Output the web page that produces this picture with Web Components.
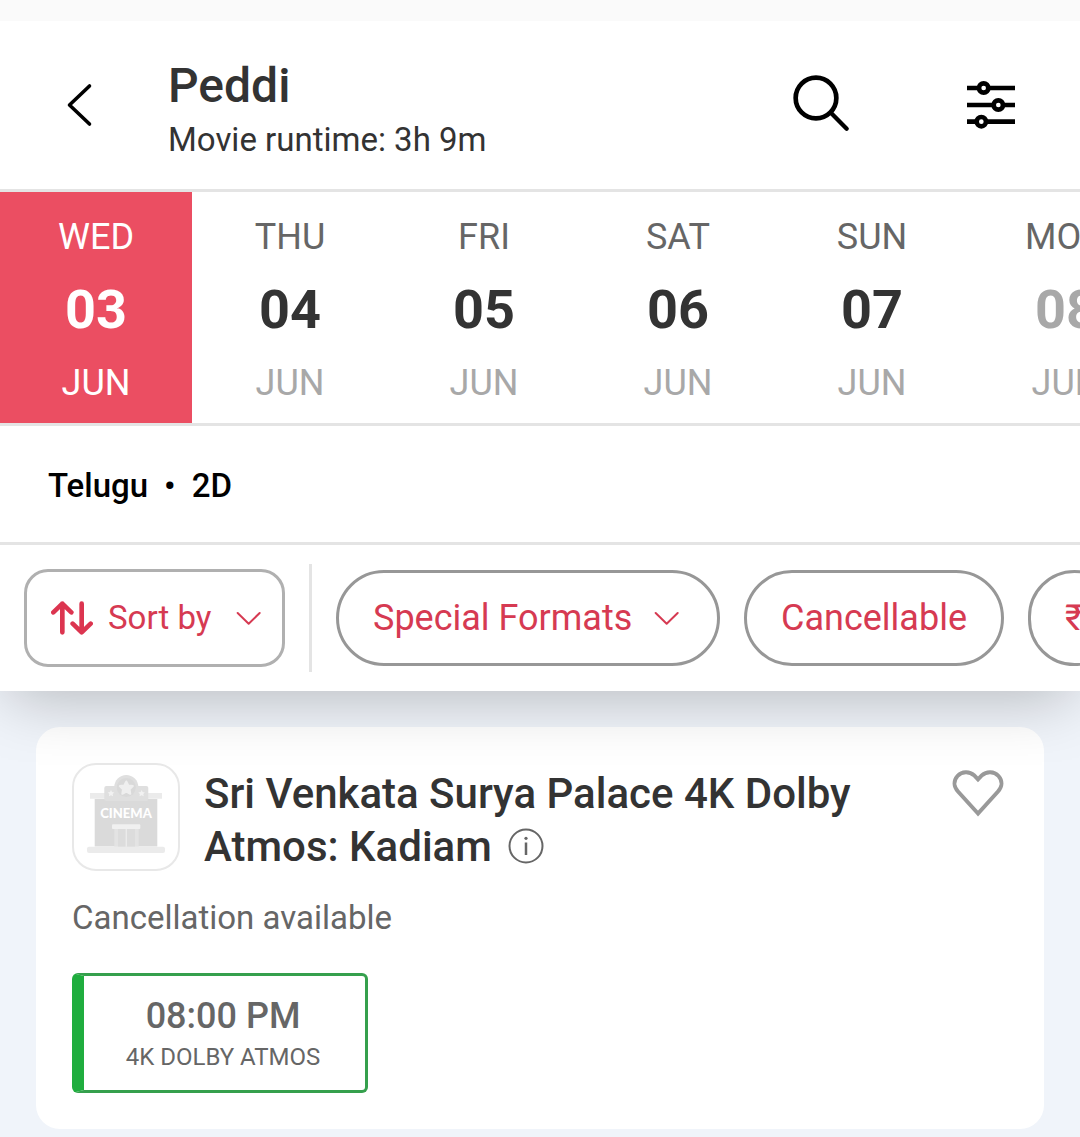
<!DOCTYPE html>
<html lang="en">
<head>
<meta charset="utf-8">
<meta name="viewport" content="width=device-width, initial-scale=1">
<title>Peddi</title>
<style>
  body {
    margin: 0;
    background: #f0f4fa;
    font-family: Roboto, "Liberation Sans", sans-serif;
    color: #333333;
  }
</style>
</head>
<body>
<showtimes-app></showtimes-app>

<script>
/**
 * Creates a template element from markup.
 *
 * @param {string} html the markup.
 * @returns {HTMLTemplateElement} The template.
 */
const createTemplate = (html) => {
  const template = document.createElement('template')
  template.innerHTML = html
  return template
}

/**
 * Defines a custom element that only renders its template.
 *
 * @param {string} name of the element.
 * @param {string} html the markup of its shadow root.
 */
const defineElement = (name, html) => {
  const template = createTemplate(html)
  customElements.define(name,
    class extends HTMLElement {
      /**
       * Creates an instance of the current type.
       */
      constructor () {
        super()
        this.attachShadow({ mode: 'open' })
          .appendChild(template.content.cloneNode(true))
      }
    }
  )
}

/**
 * The top bar with the movie title and the actions.
 */
defineElement('movie-header', `
  <style>
    :host {
      display: flex;
      align-items: center;
      padding: 0 65px 0 56px;
      border-top: 21px solid #fafafa;
      border-bottom: 3px solid #e4e4e4;
    }
    .text {
      flex: 1;
      margin-left: 64px;
      padding: 35px 0 27px;
    }
    h1 {
      margin: 0 0 2px;
      font-size: 48px;
      font-weight: 500;
      line-height: 60px;
    }
    p {
      margin: 0;
      font-size: 33px;
      line-height: 44px;
    }
    .actions {
      display: flex;
      align-items: center;
      gap: 118px;
    }
    button {
      padding: 0;
      border: 0;
      background: none;
    }
    svg {
      display: block;
      overflow: visible;
      fill: none;
      stroke: #000000;
    }
  </style>
  <button type="button" aria-label="Back">
    <svg width="48" height="48" viewBox="0 0 48 48" stroke-width="3.6" stroke-linecap="round" stroke-linejoin="round">
      <path d="M33.5 5 13.5 24l20 19"/>
    </svg>
  </button>
  <div class="text">
    <h1><slot name="title"></slot></h1>
    <p><slot name="runtime"></slot></p>
  </div>
  <div class="actions">
    <button type="button" aria-label="Search">
      <svg width="56" height="56" viewBox="0 0 168 168" stroke-linecap="round">
        <circle cx="69" cy="63" r="61" stroke-width="14"/>
        <path d="M115 109l46 46" stroke-width="13"/>
      </svg>
    </button>
    <button type="button" aria-label="Filters">
      <svg width="48" height="48" viewBox="0 0 144 144" stroke-width="14">
        <path d="M0 21h144M0 72h144M0 122h144"/>
        <g fill="#ffffff">
          <circle cx="50" cy="21" r="14"/>
          <circle cx="94" cy="72" r="14"/>
          <circle cx="43" cy="122" r="14"/>
        </g>
      </svg>
    </button>
  </div>
`)

defineElement('date-strip', `
  <style>
    :host {
      display: flex;
      gap: 2px;
      overflow: hidden;
      border-bottom: 3px solid #e4e4e4;
    }
  </style>
  <slot></slot>
`)

/**
 * One day in the date strip.
 */
defineElement('date-item', `
  <style>
    :host {
      display: block;
      flex: 0 0 192px;
    }
    button {
      display: flex;
      flex-direction: column;
      align-items: center;
      gap: 19px;
      width: 100%;
      padding: 23px 0 18px;
      border: 0;
      background: none;
      font: 400 36px/44px Roboto, "Liberation Sans", sans-serif;
      color: #666666;
    }
    .date {
      font-size: 54px;
      font-weight: 700;
      line-height: 64px;
      color: #333333;
    }
    .month {
      color: #a8a8a8;
    }
    :host([disabled]) .date {
      color: #a8a8a8;
    }
    :host([selected]) button {
      background: #eb4e62;
    }
    :host([selected]) span {
      color: #ffffff;
    }
  </style>
  <button type="button">
    <span><slot name="day"></slot></span>
    <span class="date"><slot></slot></span>
    <span class="month"><slot name="month"></slot></span>
  </button>
`)

/**
 * The chosen language and format.
 */
defineElement('language-bar', `
  <style>
    :host {
      display: flex;
      gap: 16px;
      padding: 38px 48px 34px;
      border-bottom: 3px solid #e4e4e4;
      font-size: 33px;
      font-weight: 500;
      line-height: 44px;
      color: #000000;
    }
  </style>
  <slot name="language"></slot>
  <span>•</span>
  <slot name="format"></slot>
`)

/**
 * The row with sorting and filter chips.
 */
defineElement('filter-bar', `
  <style>
    :host {
      display: flex;
      align-items: center;
      gap: 24px;
      padding: 19px 24px;
      overflow: hidden;
    }
    .divider {
      flex: 0 0 3px;
      height: 108px;
      background: #e4e4e4;
    }
  </style>
  <slot name="sort"></slot>
  <div class="divider"></div>
  <slot></slot>
`)

const chevron = `
  <svg width="25" height="15" viewBox="0 0 75 45" fill="none" stroke="#d63a52" stroke-width="6" stroke-linecap="round" stroke-linejoin="round" aria-hidden="true">
    <path d="M5 6l33 32L71 6"/>
  </svg>
`

defineElement('sort-select', `
  <style>
    :host {
      flex: none;
      display: block;
    }
    label {
      display: flex;
      align-items: center;
      height: 92px;
      padding: 0 21px 0 24px;
      border: 3px solid #b0b0b0;
      border-radius: 24px;
    }
    select {
      appearance: none;
      margin: 0 24px 0 15px;
      padding: 0;
      border: 0;
      background: none;
      font: 400 33px/44px Roboto, "Liberation Sans", sans-serif;
      color: #d63a52;
    }
    svg {
      flex: none;
      display: block;
    }
  </style>
  <label>
    <svg width="42" height="38" viewBox="0 0 126 114" fill="none" stroke="#dc3550" stroke-width="14" stroke-linecap="round" stroke-linejoin="round" aria-hidden="true">
      <path d="M34 100V14M7 40l27-26 27 26M92 14v86M65 74l27 26 27-26"/>
    </svg>
    <select aria-label="Sort by"><option>Sort by</option></select>
    ${chevron}
  </label>
`)

const chipStyle = `
  <style>
    :host {
      flex: none;
      display: block;
    }
    label, button {
      box-sizing: border-box;
      display: flex;
      align-items: center;
      height: 96px;
      padding: 0 34px;
      border: 3px solid #979797;
      border-radius: 48px;
      background: none;
      white-space: nowrap;
    }
    label {
      padding-right: 38px;
    }
    button, select {
      font: 400 36px/44px Roboto, "Liberation Sans", sans-serif;
      color: #d63a52;
    }
    select {
      appearance: none;
      margin: 0 21px 0 0;
      padding: 0;
      border: 0;
      background: none;
    }
    svg {
      flex: none;
      display: block;
    }
  </style>
`

defineElement('format-select', `
  ${chipStyle}
  <label>
    <select aria-label="Special Formats"><option>Special Formats</option></select>
    ${chevron}
  </label>
`)

defineElement('filter-chip', `
  ${chipStyle}
  <button type="button"><slot></slot></button>
`)

/**
 * Placeholder logo of a cinema.
 */
defineElement('cinema-logo', `
  <style>
    :host {
      box-sizing: border-box;
      flex: none;
      display: block;
      width: 108px;
      height: 108px;
      border: 2px solid #e8e8e8;
      border-radius: 24px;
      background: #ffffff;
    }
    svg {
      display: block;
    }
    text {
      font: 900 13px Lato, sans-serif;
    }
  </style>
  <svg width="104" height="104" viewBox="2 2 104 104" aria-hidden="true">
    <path fill="#dadada" d="M22.7 36H85.3V83.5H22.7z"/>
    <path fill="#ebebeb" d="M18 30h72v5.7H18z"/>
    <rect x="15" y="83.7" width="78" height="6.3" rx="2" fill="#ebebeb"/>
    <circle cx="54.3" cy="24" r="12" fill="#dfdfdf"/>
    <rect x="32.3" y="23" width="44" height="15" rx="2" fill="#dfdfdf"/>
    <circle cx="54.3" cy="24.5" r="9.5" fill="#d9d9d9"/>
    <path fill="#efefef" stroke="#efefef" stroke-width="2" stroke-linejoin="round" d="M54.3 18.500l2 4 4.500.600-3.200 3.200.700 4.500-4-2.100-4 2.100.700-4.500-3.200-3.200 4.500-.600z"/>
    <path fill="#f2f2f2" d="M39 27l1 2.100 2.300.300-1.600 1.600.400 2.300-2.100-1.100-2.100 1.100.400-2.300-1.600-1.600 2.300-.300zM69.600 27l1 2.100 2.300.300-1.600 1.600.400 2.300-2.100-1.100-2.100 1.100.400-2.300-1.600-1.600 2.300-.300z"/>
    <text x="54" y="54.5" text-anchor="middle" fill="#ffffff">CINEMA</text>
    <path fill="#e3e3e3" d="M42.3 66h24.4v17.5H42.3z"/>
    <path fill="#dcdcdc" d="M46 66h7.6v17.5H46zM55 66h8v17.5h-8z"/>
    <path stroke="#ededed" d="M54.3 66v17.5"/>
    <rect x="40" y="61.3" width="28.3" height="4.7" rx="1" fill="#f0f0f0"/>
  </svg>
`)

/**
 * A venue with its showtimes.
 */
defineElement('venue-card', `
  <style>
    :host {
      display: block;
      padding: 36px;
      border-radius: 24px;
      background: #ffffff;
    }
    header {
      display: flex;
      align-items: flex-start;
      gap: 24px;
    }
    h2 {
      flex: 1;
      max-width: 680px;
      margin: 0;
      padding-top: 4px;
      font-size: 42px;
      font-weight: 500;
      line-height: 53px;
    }
    button {
      padding: 0;
      border: 0;
      background: none;
    }
    .info {
      display: inline-block;
      margin-left: 6px;
      vertical-align: -3px;
    }
    .like {
      margin-left: auto;
    }
    svg {
      display: block;
      fill: none;
    }
    p {
      margin: 23px 0 33px;
      font-size: 33px;
      line-height: 44px;
      color: #666666;
    }
    .times {
      display: flex;
      flex-wrap: wrap;
      gap: 24px;
    }
  </style>
  <header>
    <cinema-logo></cinema-logo>
    <h2>
      <slot name="name"></slot>
      <button class="info" type="button" aria-label="Venue details">
        <svg width="36" height="36" viewBox="0 0 36 36" stroke="#666666" stroke-width="2">
          <circle cx="18" cy="18" r="16.5"/>
          <path d="M18 14.5V27" stroke-width="2.5"/>
          <circle cx="18" cy="10.3" r="1.6" fill="#666666" stroke="none"/>
        </svg>
      </button>
    </h2>
    <button class="like" type="button" aria-label="Add to favourites">
      <svg width="60" height="60" viewBox="0 0 60 60" stroke="#999999" stroke-width="4">
        <path d="M30 50.5L10 28.5C5.5 23.5 5.5 17.5 9.5 13 14 8 21.5 8 26 12.2L30 16.3 34 12.2C38.5 8 46 8 50.5 13 54.5 17.5 54.5 23.5 50 28.5z"/>
      </svg>
    </button>
  </header>
  <p><slot name="note"></slot></p>
  <div class="times"><slot></slot></div>
`)

/**
 * A single showtime.
 */
defineElement('show-time', `
  <style>
    :host {
      display: block;
    }
    button {
      display: flex;
      flex-direction: column;
      align-items: center;
      gap: 3px;
      min-width: 296px;
      padding: 18px 42px 17px 39px;
      border: 3px solid #35a04d;
      border-left: 12px solid #1fad3e;
      border-radius: 6px;
      background: none;
      font: 500 36px/44px Roboto, "Liberation Sans", sans-serif;
      color: #666666;
    }
    .format {
      font-size: 24px;
      font-weight: 400;
      line-height: 32px;
    }
  </style>
  <button type="button">
    <span><slot name="time"></slot></span>
    <span class="format"><slot name="format"></slot></span>
  </button>
`)

/**
 * The whole page.
 */
defineElement('showtimes-app', `
  <style>
    :host {
      display: block;
    }
    .top {
      position: relative;
      z-index: 1;
      background: #ffffff;
      box-shadow: 0 14px 60px -8px rgba(0, 0, 0, 0.25);
    }
    main {
      display: grid;
      gap: 24px;
      padding: 36px 36px 8px;
    }
  </style>
  <div class="top">
    <movie-header>
      <span slot="title">Peddi</span>
      <span slot="runtime">Movie runtime: 3h 9m</span>
    </movie-header>
    <date-strip>
      <date-item selected><span slot="day">WED</span>03<span slot="month">JUN</span></date-item>
      <date-item><span slot="day">THU</span>04<span slot="month">JUN</span></date-item>
      <date-item><span slot="day">FRI</span>05<span slot="month">JUN</span></date-item>
      <date-item><span slot="day">SAT</span>06<span slot="month">JUN</span></date-item>
      <date-item><span slot="day">SUN</span>07<span slot="month">JUN</span></date-item>
      <date-item disabled><span slot="day">MON</span>08<span slot="month">JUN</span></date-item>
    </date-strip>
    <language-bar>
      <span slot="language">Telugu</span>
      <span slot="format">2D</span>
    </language-bar>
    <filter-bar>
      <sort-select slot="sort"></sort-select>
      <format-select></format-select>
      <filter-chip>Cancellable</filter-chip>
      <filter-chip>₹</filter-chip>
    </filter-bar>
  </div>
  <main>
    <venue-card>
      <span slot="name">Sri Venkata Surya Palace 4K Dolby Atmos: Kadiam</span>
      <span slot="note">Cancellation available</span>
      <show-time>
        <span slot="time">08:00 PM</span>
        <span slot="format">4K DOLBY ATMOS</span>
      </show-time>
    </venue-card>
  </main>
`)
</script>
</body>
</html>
